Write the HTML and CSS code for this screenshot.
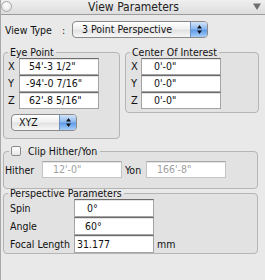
FILE: index.html
```html
<!DOCTYPE html>
<html>
<head>
<meta charset="utf-8">
<title>View Parameters</title>
<link rel="stylesheet" href="styles.css">
</head>
<body>
<div class="window">
  <div class="titlebar">
    <span class="close"></span>
    <span class="title">View Parameters</span>
    <svg class="collapse" width="8" height="7" viewBox="0 0 8 7"><path d="M0 0.5 H8 L4 7 Z" fill="#6f6f6f"/></svg>
  </div>

  <div class="viewtype">
    <span class="vt-label">View Type</span>
    <span class="colon">:</span>
    <div class="popup popup-wide">
      <span class="popup-text">3 Point Perspective</span>
      <span class="popup-arrows">
        <svg width="7" height="11" viewBox="0 0 7 11"><path d="M3.5 1 L6 4.5 H1 Z M1 6.5 H6 L3.5 10 Z" fill="#111"/></svg>
      </span>
    </div>
  </div>

  <div class="groups">
    <fieldset class="group eye">
      <legend>Eye Point</legend>
      <div class="row"><span class="axis">X</span><span class="field p10">54'-3 1/2"</span></div>
      <div class="row"><span class="axis">Y</span><span class="field p7">-94'-0 7/16"</span></div>
      <div class="row"><span class="axis">Z</span><span class="field p10">62'-8 5/16"</span></div>
      <div class="popup popup-xyz">
        <span class="popup-text">XYZ</span>
        <span class="popup-arrows">
          <svg width="7" height="11" viewBox="0 0 7 11"><path d="M3.5 1 L6 4.5 H1 Z M1 6.5 H6 L3.5 10 Z" fill="#111"/></svg>
        </span>
      </div>
    </fieldset>

    <fieldset class="group coi">
      <legend>Center Of Interest</legend>
      <div class="row"><span class="axis">X</span><span class="field p13">0'-0"</span></div>
      <div class="row"><span class="axis">Y</span><span class="field p13">0'-0"</span></div>
      <div class="row"><span class="axis">Z</span><span class="field p13">0'-0"</span></div>
    </fieldset>
  </div>

  <fieldset class="group clip">
    <legend><span class="check"></span><span>Clip Hither/Yon</span></legend>
    <div class="row">
      <span class="lbl-hither">Hither</span>
      <span class="field disabled p11">12'-0"</span>
      <span class="lbl-yon">Yon</span>
      <span class="field disabled p11">166'-8"</span>
    </div>
  </fieldset>

  <fieldset class="group persp">
    <legend>Perspective Parameters</legend>
    <div class="prow"><span class="plabel">Spin</span><span class="field p13">0°</span></div>
    <div class="prow"><span class="plabel">Angle</span><span class="field p11">60°</span></div>
    <div class="prow"><span class="plabel">Focal Length</span><span class="field p3">31.177</span><span class="unit">mm</span></div>
  </fieldset>
</div>
</body>
</html>
```

FILE: styles.css
```css
* {
  box-sizing: border-box;
}

html, body {
  margin: 0;
  padding: 0;
  background: #e8e8e8;
}

body {
  font-family: "DejaVu Sans Condensed", "DejaVu Sans", sans-serif;
  font-stretch: condensed;
  font-size: 10.5px;
  color: #111;
}

.window {
  width: 265px;
  height: 280px;
  background: #e9e9e9;
  border-left: 1px solid #a8a8a8;
  overflow: hidden;
}

/* Title bar */
.titlebar {
  height: 15px;
  display: flex;
  align-items: center;
  justify-content: space-between;
  padding: 0 4px 0 0;
  background: linear-gradient(#efefef, #dddddd);
  border-bottom: 1px solid #9c9c9c;
}

.close {
  width: 11px;
  height: 11px;
  border-radius: 50%;
  border: 1px solid #a6a6a6;
  background: radial-gradient(circle at 50% 35%, #ffffff, #dcdcdc);
  margin-top: -1px;
}

.title {
  font-size: 12px;
  color: #222;
  line-height: 14px;
  margin-left: 2px;
}

.collapse {
  display: block;
  margin-top: -2px;
}

/* View type row */
.viewtype {
  display: flex;
  align-items: center;
  margin-top: 6px;
  padding-left: 4px;
  height: 17px;
}

.vt-label {
  width: 57px;
}

.colon {
  width: 10px;
}

.popup {
  display: flex;
  align-items: stretch;
  height: 17px;
  border: 1px solid #8a8a8a;
  border-radius: 4px;
  background: linear-gradient(#ffffff, #f1f1f1 45%, #e2e2e2 55%, #f7f7f7);
  overflow: hidden;
}

.popup-text {
  flex: 1;
  line-height: 15px;
  color: #111;
}

.popup-arrows {
  width: 17px;
  display: flex;
  align-items: center;
  justify-content: center;
  border-left: 1px solid #6d8fc2;
  background: linear-gradient(#d3e4fa, #8fb9ef 45%, #5f9be8 55%, #a9cdf8);
}

.popup-wide {
  width: 136px;
}

.popup-wide .popup-text {
  padding-left: 9px;
}

.popup-xyz {
  width: 66px;
  margin-top: 5px;
  margin-left: 3px;
}

.popup-xyz .popup-text {
  padding-left: 7px;
}

/* Groups */
.groups {
  display: flex;
  align-items: flex-start;
  gap: 5px;
  margin-top: 8px;
  padding-left: 2px;
}

.group {
  margin: 0;
  border: 1px solid #b5b5b5;
  border-radius: 4px;
  background: #e2e2e2;
  min-width: 0;
}

.group legend {
  padding: 0 2px;
  line-height: 12px;
}

.eye {
  width: 117px;
  padding: 0 4px 7px 4px;
}

.coi {
  width: 134px;
  padding: 0 4px 3px 5px;
}

.coi legend {
  margin-left: -1px;
}

.row {
  display: flex;
  align-items: center;
}

.axis {
  width: 11px;
  font-size: 11px;
}

.coi .axis {
  width: 10px;
}

.field {
  display: block;
  width: 80px;
  height: 17px;
  line-height: 15px;
  background: #ffffff;
  border: 1px solid #a4a4a4;
  border-top-color: #6c6c6c;
  box-shadow: inset 0 1px 0 #e4e4e4;
  color: #111;
  white-space: nowrap;
  overflow: hidden;
}

.field.disabled {
  color: #a0a0a0;
  border-color: #c4c4c4;
  border-top-color: #a8a8a8;
}

.p3 { padding-left: 2px; }
.p7 { padding-left: 6px; }
.p10 { padding-left: 9px; }
.p11 { padding-left: 10px; }
.p13 { padding-left: 12px; }

/* Clip group */
.clip {
  width: 255px;
  margin-top: 6px;
  margin-left: 2px;
  padding: 4px 2px 10px 1px;
}

.clip legend {
  display: flex;
  align-items: center;
  gap: 7px;
  margin-left: 4px;
  padding: 0 3px 0 2px;
}

.check {
  display: block;
  width: 10px;
  height: 10px;
  border: 1px solid #8a8a8a;
  border-radius: 2px;
  background: linear-gradient(#ffffff, #e8e8e8);
}

.lbl-hither {
  width: 37px;
}

.lbl-yon {
  width: 24px;
  padding-left: 3px;
}

/* Perspective group */
.persp {
  width: 255px;
  margin-top: -2px;
  margin-left: 2px;
  padding: 0 4px 0 6px;
}

.persp legend {
  margin-left: -2px;
}

.prow {
  display: flex;
  align-items: center;
}

.prow .field {
  height: 18px;
  line-height: 16px;
}

.plabel {
  width: 64px;
}

.unit {
  margin-left: 3px;
}
```
